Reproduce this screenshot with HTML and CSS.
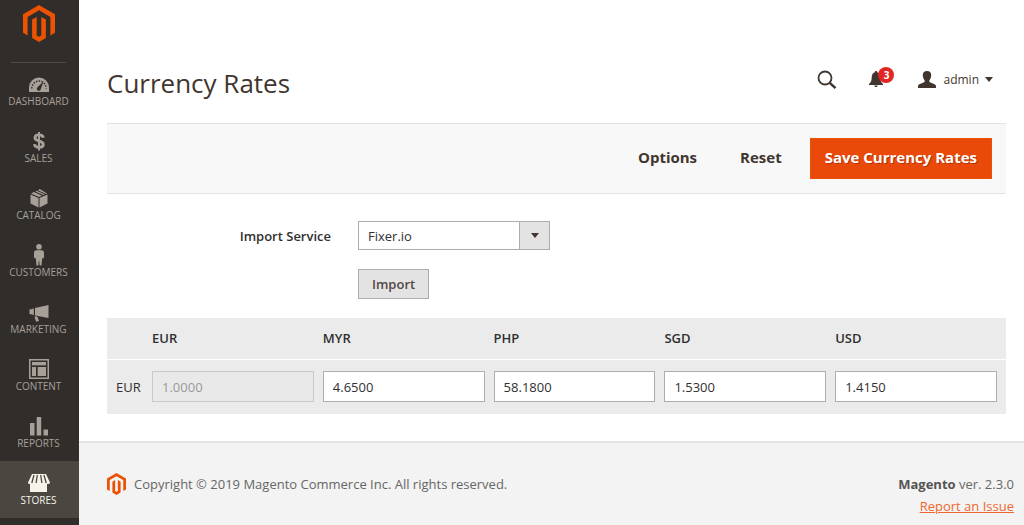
FILE: index.html
```html
<!DOCTYPE html>
<html lang="en">
<head>
    <meta charset="UTF-8">
    <meta name="viewport" content="width=device-width, initial-scale=1.0">
    <title>Currency Rates / Magento Admin</title>
    <link rel="stylesheet" href="styles.css">
</head>
<body>
    <svg width="0" height="0" class="symbols" aria-hidden="true">
        <symbol id="magento" viewBox="0 0 32 37">
            <path d="M16 0 0 9.200V27.700l4.600 2.700V11.900L16 5.300l11.400 6.600v18.500l4.600-2.700V9.200z"/>
            <path d="M18.300 30.400 16 31.700l-2.300-1.300V11.900L9.100 14.500V33L16 37l6.900-4V14.500l-4.600-2.600z"/>
        </symbol>
    </svg>

    <aside class="sidebar">
        <a href="#" class="sidebar-logo" aria-label="Magento">
            <svg width="32" height="37"><use href="#magento"/></svg>
        </a>
        <nav class="menu">
            <a href="#" class="menu-item">
                <svg viewBox="0 0 22 22">
                    <path d="M1 19V14.500a10 10 0 0 1 20 0V19z"/>
                    <path d="M3.800 15.500a7.200 7.500 0 0 1 14.400 0" fill="none" stroke="#312d2a" stroke-width="1.500" stroke-dasharray="1.500 1.300"/>
                    <path d="M15.500 8.500 12.800 16a2 2 0 1 1-3.300-1.700z" fill="#312d2a"/>
                </svg>
                <span>DASHBOARD</span>
            </a>
            <a href="#" class="menu-item">
                <svg viewBox="0 0 22 22">
                    <path d="M11 2v18.500" fill="none" stroke="currentColor" stroke-width="2"/>
                    <path d="M15.300 7.700C15 5.600 13.300 4.900 11 4.900c-2.500 0-4 1-4 2.800 0 4.200 8.300 2.500 8.300 6.500 0 2-1.700 3.100-4.300 3.100-2.700 0-4.300-1-4.600-3.200" fill="none" stroke="currentColor" stroke-width="2.900"/>
                </svg>
                <span>SALES</span>
            </a>
            <a href="#" class="menu-item">
                <svg viewBox="0 0 22 22">
                    <path d="M2.500 7.500 10.500 11v9.500l-8-4zM19.500 7.500 11.500 11v9.500l8-4zM3 6.500l3-1.400 8 3.600-3 1.400zM7.300 4.500l1.500-.7 8 3.600-1.500.7zM10 3.200 11.800 2 19 6.500l-1 .4z"/>
                </svg>
                <span>CATALOG</span>
            </a>
            <a href="#" class="menu-item">
                <svg viewBox="0 0 22 22">
                    <circle cx="11" cy="2.800" r="2.800"/>
                    <path d="M8.500 6.300h5c1.700 0 2.500 1 2.500 2.500v4.400c0 1.500-1.400 1.500-1.700.3L13.500 21.500h-1.800L11 15.500l-.7 6H8.500L7.700 13.500C7.400 14.700 6 14.700 6 13.200V8.800c0-1.500.8-2.500 2.500-2.500z"/>
                </svg>
                <span>CUSTOMERS</span>
            </a>
            <a href="#" class="menu-item">
                <svg viewBox="0 0 22 22">
                    <path d="M20.500 4v13l-13.500-2.500V7zM5.800 7.500v6.500L4.500 14v-.8H1.500v-5h3v-.7zM6.500 15.200l3 .6 1.500 4.200-2.600.8c-.8-1.500-1.600-3.500-1.900-5.600z"/>
                </svg>
                <span>MARKETING</span>
            </a>
            <a href="#" class="menu-item">
                <svg viewBox="0 0 22 22">
                    <path d="M1 1h20v20H1zM2.500 2.500v17h17v-17z" fill-rule="evenodd"/>
                    <path d="M4 4h14v3.500H4zM4 9h4v9H4zM9.500 9H18v9H9.500z"/>
                    <path d="M4 8.200h14M8.800 8v10" stroke="#312d2a" fill="none"/>
                </svg>
                <span>CONTENT</span>
            </a>
            <a href="#" class="menu-item">
                <svg viewBox="0 0 22 22">
                    <path d="M2 8h4.500v12.500H2zM8.700 2h4.500v18.500H8.700zM15.500 14.500H20v6h-4.500z"/>
                </svg>
                <span>REPORTS</span>
            </a>
            <a href="#" class="menu-item active">
                <svg viewBox="0 0 22 22">
                    <path d="M4 2h14l4 8.500c-.3 1.700-2 2-3 1.200V20H2V11.700c-1 .8-1.700.2-2-1.200z"/>
                    <path d="M6 3 3.800 11M9.300 3l-1.200 8M12.700 3l1.200 8M16 3l2.200 8" stroke="#4a4640" stroke-width="1.300" fill="none"/>
                </svg>
                <span>STORES</span>
            </a>
        </nav>
    </aside>

    <div class="page">
        <header class="page-header">
            <h1>Currency Rates</h1>
            <div class="header-tools">
                <button type="button" class="tool" aria-label="Search">
                    <svg width="20" height="20" viewBox="0 0 20 20">
                        <circle cx="8" cy="8" r="6.500" fill="none" stroke="currentColor" stroke-width="1.800"/>
                        <path d="m12.800 12.800 5.700 5.400" stroke="currentColor" stroke-width="2.500"/>
                    </svg>
                </button>
                <button type="button" class="tool notifications" aria-label="Notifications">
                    <svg width="14" height="17" viewBox="0 0 14 17">
                        <path d="M7 0c.8 0 1.200.5 1.200 1.300C10.500 2 11.300 4 11.300 6.500c0 3.500 1 4.700 2.700 6.500v1H0v-1c1.700-1.800 2.700-3 2.700-6.500C2.700 4 3.500 2 5.800 1.300 5.800.5 6.200 0 7 0zM5.300 14.500h3.400C8.500 16.500 5.500 16.500 5.300 14.500z"/>
                    </svg>
                    <span class="badge">3</span>
                </button>
                <button type="button" class="tool account">
                    <svg width="18" height="17" viewBox="0 0 18 17">
                        <path d="M9 0c3 0 4.300 1.700 4.200 4.300-.1 2-.6 3.800-1.800 5v1.500c.5 1.200 6.600 1.700 6.600 4.400V17H0v-1.800c0-2.700 6.100-3.200 6.600-4.400V9.300c-1.200-1.200-1.700-3-1.800-5C4.700 1.700 6 0 9 0z"/>
                    </svg>
                    <span>admin</span>
                    <i class="caret"></i>
                </button>
            </div>
        </header>

        <main>
            <div class="page-actions">
                <button type="button" class="action">Options</button>
                <button type="button" class="action">Reset</button>
                <button type="submit" form="ratesForm" class="action primary">Save Currency Rates</button>
            </div>

            <div class="import-form">
                <label for="importService">Import Service</label>
                <div class="select-wrap">
                    <select id="importService">
                        <option>Fixer.io</option>
                    </select>
                    <span class="select-arrow"><i class="caret"></i></span>
                </div>
                <button type="button" class="import-button">Import</button>
            </div>

            <form id="ratesForm">
                <table class="rates">
                    <thead>
                        <tr>
                            <th class="currency"></th>
                            <th scope="col">EUR</th>
                            <th scope="col">MYR</th>
                            <th scope="col">PHP</th>
                            <th scope="col">SGD</th>
                            <th scope="col">USD</th>
                        </tr>
                    </thead>
                    <tbody>
                        <tr>
                            <th scope="row" class="currency">EUR</th>
                            <td><input type="text" aria-label="EUR to EUR" value="1.0000" disabled></td>
                            <td><input type="text" aria-label="EUR to MYR" value="4.6500"></td>
                            <td><input type="text" aria-label="EUR to PHP" value="58.1800"></td>
                            <td><input type="text" aria-label="EUR to SGD" value="1.5300"></td>
                            <td><input type="text" aria-label="EUR to USD" value="1.4150"></td>
                        </tr>
                    </tbody>
                </table>
            </form>
        </main>

        <footer class="page-footer">
            <div class="copyright">
                <svg width="19" height="22"><use href="#magento"/></svg>
                <span>Copyright © 2019 Magento Commerce Inc. All rights reserved.</span>
            </div>
            <div class="version">
                <div><strong>Magento</strong> ver. 2.3.0</div>
                <a href="#">Report an Issue</a>
            </div>
        </footer>
    </div>
</body>
</html>
```
FILE: styles.css
```css
* {
    box-sizing: border-box;
}
body {
    display: flex;
    min-height: 100vh;
    margin: 0;
    background: #fff;
    color: #303030;
    font-family: "Open Sans", "Liberation Sans", sans-serif;
    font-size: 13px;
    line-height: 22px;
}
button, input, select {
    font: inherit;
    color: inherit;
    border-radius: 0;
}
button {
    cursor: pointer;
}
svg {
    display: block;
    fill: currentColor;
}
.symbols {
    position: absolute;
}
.caret {
    border: 4px solid transparent;
    border-top: 5px solid #41362f;
    border-bottom: 0;
}

/* sidebar */
.sidebar {
    flex: 0 0 79px;
    background: #312d2a;
}
.sidebar-logo {
    display: flex;
    justify-content: center;
    margin: 0 13px 0 11px;
    padding: 5px 0 20px;
    border-bottom: 1px solid #524846;
    color: #eb5202;
}
.menu {
    margin-top: -1px;
}
.menu-item {
    display: flex;
    flex-direction: column;
    align-items: center;
    height: 57px;
    padding: 11px 2px 0 0;
    color: #a6a098;
    font-size: 10px;
    line-height: 12px;
    text-decoration: none;
}
.menu-item svg {
    width: 22px;
    height: 22px;
}
.menu-item.active {
    background: #4a4640;
    color: #f7f3eb;
}

/* page */
.page {
    flex: 1;
    display: flex;
    flex-direction: column;
    min-width: 0;
}
.page-header {
    display: flex;
    align-items: center;
    justify-content: space-between;
    padding: 64px 31px 20px 28px;
}
h1 {
    margin: 0;
    color: #41362f;
    font-size: 26px;
    font-weight: 400;
    line-height: 39px;
}
.header-tools {
    display: flex;
    align-items: center;
    gap: 32px;
    padding-bottom: 8px;
}
.tool {
    display: flex;
    align-items: center;
    padding: 0;
    border: 0;
    background: none;
    color: #41362f;
    font-size: 12px;
}
.notifications {
    position: relative;
}
.badge {
    position: absolute;
    top: -4px;
    left: 9px;
    width: 16px;
    border-radius: 8px;
    background: #e22626;
    color: #fff;
    font-size: 10px;
    font-weight: 700;
    line-height: 16px;
    text-align: center;
}
.account {
    gap: 7px;
    margin-left: 3px;
}
.account .caret {
    margin-left: -1px;
}
main {
    padding: 0 18px 27px 28px;
}
.page-actions {
    display: flex;
    justify-content: flex-end;
    gap: 13px;
    padding: 14px;
    border-top: 1px solid #e3e3e3;
    border-bottom: 1px solid #e3e3e3;
    background: #f8f8f8;
}
.action {
    height: 41px;
    padding: 0 14px 3px;
    border: 1px solid transparent;
    background: none;
    color: #41362f;
    font-size: 15px;
    font-weight: 700;
}
.action.primary {
    border-color: #eb5202;
    background: #e94909;
    color: #fff;
    text-shadow: 1px 1px 0 rgba(0, 0, 0, .25);
}

/* import service */
.import-form {
    display: grid;
    grid-template-columns: 224px 192px;
    gap: 19px 27px;
    align-items: center;
    padding: 27px 0 19px;
}
.import-form label {
    font-weight: 600;
    text-align: right;
}
.select-wrap {
    position: relative;
}
select {
    display: block;
    width: 100%;
    height: 29px;
    padding: 0 40px 0 9px;
    border: 1px solid #adadad;
    background: #fff;
    appearance: none;
}
.select-arrow {
    position: absolute;
    top: 0;
    right: 0;
    bottom: 0;
    display: flex;
    align-items: center;
    justify-content: center;
    width: 31px;
    border: 1px solid #adadad;
    background: #e3e3e3;
    pointer-events: none;
}
.import-button {
    grid-column: 2;
    justify-self: start;
    height: 30px;
    padding: 0 13px;
    border: 1px solid #adadad;
    background: #e3e3e3;
    color: #514943;
    font-weight: 600;
    line-height: 20px;
}

/* rates table */
.rates {
    width: 100%;
    border-collapse: collapse;
    table-layout: fixed;
    background: #ebebeb;
}
.rates th, .rates td {
    padding: 0 9px 0 0;
    text-align: left;
}
.rates th {
    height: 41px;
    font-weight: 600;
}
.rates .currency {
    width: 45px;
    padding: 0 0 0 9px;
    font-weight: 400;
}
.rates tbody tr {
    border-top: 1px solid #fff;
}
.rates tbody td {
    height: 55px;
}
.rates input {
    display: block;
    width: 100%;
    height: 31px;
    padding: 0 9px;
    border: 1px solid #adadad;
    background: #fff;
}
.rates input:disabled {
    border-color: #c9c9c9;
    background: #e9e9e9;
    color: #999;
}

/* footer */
.page-footer {
    flex: 1;
    display: flex;
    justify-content: space-between;
    align-items: flex-start;
    padding: 30px 10px 8px 28px;
    border-top: 2px solid #e3e3e3;
    background: #f3f3f3;
    color: #666;
}
.copyright {
    display: flex;
    align-items: center;
    gap: 8px;
}
.copyright svg {
    color: #eb5202;
}
.version {
    text-align: right;
}
.version strong {
    color: #555;
}
.version a {
    color: #ef672f;
}
```
